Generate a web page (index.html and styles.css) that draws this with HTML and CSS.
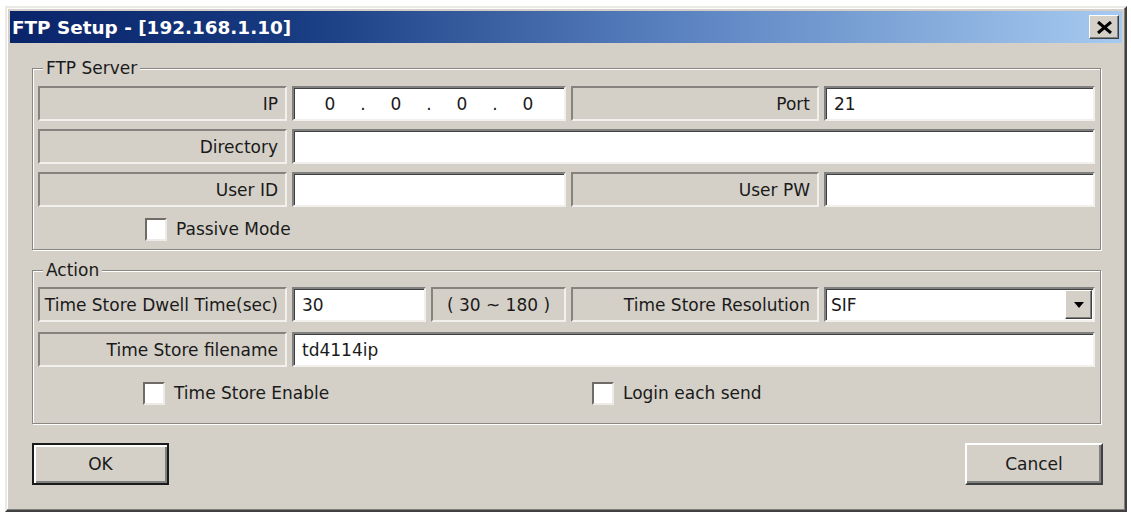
FILE: index.html
```html
<!DOCTYPE html>
<html lang="en">
<head>
    <meta charset="UTF-8">
    <meta name="viewport" content="width=device-width, initial-scale=1.0">
    <title>FTP Setup</title>
    <link rel="stylesheet" href="styles.css">
</head>
<body>
    <div class="dialog">
        <div class="titlebar">
            <span class="title">FTP Setup - [192.168.1.10]</span>
            <button class="close" type="button">
                <svg width="17" height="13" viewBox="0 0 17 13">
                    <path d="M2 1 L15 12 M15 1 L2 12" stroke="#000" stroke-width="3" fill="none"/>
                </svg>
            </button>
        </div>

        <div class="group group-server">
            <span class="group-title">FTP Server</span>
            <div class="form-grid">
                <div class="label">IP</div>
                <div class="field ip span-2">
                    <span class="octet">0</span><span class="dot">.</span>
                    <span class="octet">0</span><span class="dot">.</span>
                    <span class="octet">0</span><span class="dot">.</span>
                    <span class="octet">0</span>
                </div>
                <div class="label">Port</div>
                <input class="field" type="text" value="21">

                <div class="label">Directory</div>
                <input class="field span-4" type="text" value="">

                <div class="label">User ID</div>
                <input class="field span-2" type="text" value="">
                <div class="label">User PW</div>
                <input class="field" type="password" value="">
            </div>
            <div class="checks">
                <label class="check passive"><span class="box"></span>Passive Mode</label>
            </div>
        </div>

        <div class="group group-action">
            <span class="group-title">Action</span>
            <div class="form-grid">
                <div class="label">Time Store Dwell Time(sec)</div>
                <input class="field" type="text" value="30">
                <div class="label label-center">( 30 ~ 180 )</div>
                <div class="label">Time Store Resolution</div>
                <div class="field combo">
                    <span>SIF</span>
                    <span class="combo-btn"><span class="arrow"></span></span>
                </div>

                <div class="label">Time Store filename</div>
                <input class="field span-4" type="text" value="td4114ip">
            </div>
            <div class="checks">
                <label class="check store-enable"><span class="box"></span>Time Store Enable</label>
                <label class="check login-send"><span class="box"></span>Login each send</label>
            </div>
        </div>

        <div class="buttons">
            <button class="btn btn-default" type="button">OK</button>
            <button class="btn" type="button">Cancel</button>
        </div>
    </div>
</body>
</html>
```

FILE: styles.css
```css
body {
    margin: 6px 0 0 5px;
    background-color: #fff;
    font-family: 'DejaVu Sans', Verdana, sans-serif;
    font-size: 17px;
    color: #1a1a1a;
}
.dialog {
    box-sizing: border-box;
    width: 1122px;
    height: 506px;
    padding: 3px;
    background-color: #d4d0c8;
    border: 2px solid;
    border-color: #ebe9e5 #404040 #404040 #ebe9e5;
    box-shadow: inset -1px -1px 0 #808080, inset 1px 1px 0 #fff;
}

/* title bar */
.titlebar {
    height: 32px;
    display: flex;
    align-items: center;
    justify-content: space-between;
    padding: 0 3px 0 2px;
    background: linear-gradient(to right, #0a246a 0%, #173a80 25%, #5a82c0 60%, #a6caf0 100%);
}
.title {
    color: #fff;
    font-weight: bold;
    font-size: 18.4px;
}
.close {
    width: 30px;
    height: 24px;
    padding: 0;
    display: flex;
    align-items: center;
    justify-content: center;
    background-color: #d4d0c8;
    border: 1px solid;
    border-color: #fff #404040 #404040 #fff;
    box-shadow: inset -1px -1px 0 #808080;
}

/* group boxes */
.group {
    position: relative;
    margin: 0 21px 0 22px;
    padding: 0 5px;
    border: 1px solid #8a8782;
    box-shadow: inset 1px 1px 0 #fff, 1px 1px 0 #fff;
}
.group-server {
    margin-top: 25px;
    padding-top: 17px;
    padding-bottom: 3px;
}
.group-action {
    margin-top: 20px;
    padding-top: 16px;
    padding-bottom: 13px;
}
.group-title {
    position: absolute;
    top: -11px;
    left: 10px;
    padding: 0 3px;
    line-height: 20px;
    background-color: #d4d0c8;
}

/* label / field grid */
.form-grid,
.checks {
    display: grid;
    grid-template-columns: 249px 134px 135px 248px 1fr;
    column-gap: 5px;
}
.form-grid {
    grid-auto-rows: 35px;
}
.group-server .form-grid {
    row-gap: 8px;
}
.group-action .form-grid {
    row-gap: 10px;
}
.span-2 {
    grid-column: span 2;
}
.span-4 {
    grid-column: span 4;
}
.label {
    display: flex;
    align-items: center;
    justify-content: flex-end;
    padding-right: 7px;
    border: 2px solid;
    border-color: #86837e #f2f0ec #f2f0ec #86837e;
    white-space: nowrap;
}
.label-center {
    justify-content: center;
    padding-right: 0;
}
.field {
    box-sizing: border-box;
    width: 100%;
    height: 35px;
    margin: 0;
    padding: 0 0 0 8px;
    display: flex;
    align-items: center;
    font-family: inherit;
    font-size: 17px;
    color: #1a1a1a;
    background-color: #fff;
    border: 2px solid;
    border-color: #808080 #f2f0ec #f2f0ec #808080;
    box-shadow: inset 1px 1px 0 #404040;
    outline: none;
}

/* ip address control */
.ip {
    padding-left: 10px;
}
.octet {
    width: 52px;
    text-align: center;
}
.dot {
    width: 14px;
    text-align: center;
}

/* combo box */
.combo {
    justify-content: space-between;
    padding-right: 1px;
    padding-left: 5px;
}
.combo-btn {
    box-sizing: border-box;
    width: 27px;
    height: 29px;
    display: flex;
    align-items: center;
    justify-content: center;
    background-color: #d4d0c8;
    border: 1px solid;
    border-color: #fff #404040 #404040 #fff;
    box-shadow: inset -1px -1px 0 #808080;
}
.arrow {
    width: 0;
    height: 0;
    border-left: 5px solid transparent;
    border-right: 5px solid transparent;
    border-top: 6px solid #000;
}

/* check boxes */
.checks {
    height: 34px;
    align-items: center;
}
.group-server .checks {
    margin-top: 5px;
}
.group-action .checks {
    margin-top: 9px;
}
.check {
    display: flex;
    align-items: center;
    white-space: nowrap;
}
.box {
    box-sizing: border-box;
    flex-shrink: 0;
    width: 22px;
    height: 23px;
    margin-right: 9px;
    background-color: #fff;
    border: 2px solid;
    border-color: #6f6c68 #ecebe8 #ecebe8 #6f6c68;
}
.passive {
    grid-column: 1 / span 3;
    padding-left: 107px;
}
.store-enable {
    grid-column: 1 / span 3;
    padding-left: 105px;
}
.login-send {
    grid-column: 4 / span 2;
    padding-left: 21px;
}

/* dialog buttons */
.buttons {
    display: flex;
    justify-content: space-between;
    margin-top: 19px;
    padding: 0 19px 0 22px;
}
.btn {
    box-sizing: border-box;
    width: 138px;
    height: 42px;
    font-family: inherit;
    font-size: 17px;
    color: #1a1a1a;
    background-color: #d4d0c8;
    border: 2px solid;
    border-color: #fff #404040 #404040 #fff;
    box-shadow: inset -2px -2px 0 #808080;
}
.btn-default {
    width: 137px;
    border: 2px solid #1a1a1a;
    box-shadow: inset 2px 2px 0 #fff, inset -2px -2px 0 #808080;
}
```
